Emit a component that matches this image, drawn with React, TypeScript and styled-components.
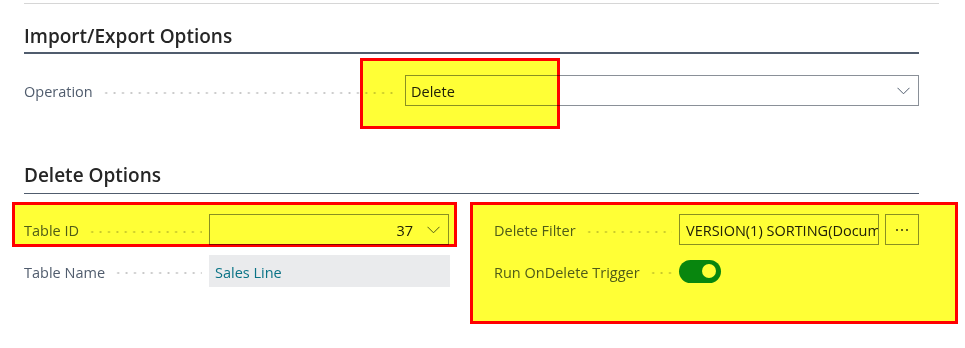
import React from "react";
import styled, { createGlobalStyle } from "styled-components";

const Global = createGlobalStyle`
  html, body { margin: 0; padding: 0; background: #ffffff; }
  body { font-family: "Open Sans", "Noto Sans", sans-serif; color: #212121; }
  * { box-sizing: border-box; }
`;

const Page = styled.div`
  position: relative;
  width: 965px;
  height: 348px;
  padding: 3px 0 0 24px;
  overflow: hidden;
`;

const TopRule = styled.div`
  width: 915px;
  height: 1px;
  background: #d6d6d6;
`;

const Section = styled.section<{ $top: number }>`
  width: 895px;
  margin-top: ${(p) => p.$top}px;
`;

const Heading = styled.h2<{ $rule: number; $gap: number }>`
  margin: 0;
  font-size: 19px;
  font-weight: 600;
  line-height: 22px;
  color: #262626;
  padding-bottom: ${(p) => p.$gap}px;
  border-bottom: ${(p) => p.$rule}px solid #505c6d;
`;

const Body = styled.div<{ $top: number }>`
  margin-top: ${(p) => p.$top}px;
`;

const Columns = styled.div`
  display: grid;
  grid-template-columns: 425px 425px;
  column-gap: 45px;
`;

const Column = styled.div`
  display: flex;
  flex-direction: column;
  gap: 10px;
`;

const Row = styled.div<{ $label: number; $h?: number }>`
  display: grid;
  grid-template-columns: ${(p) => p.$label}px 1fr;
  align-items: center;
  height: ${(p) => p.$h ?? 31}px;
`;

const Caption = styled.div<{ $end: number }>`
  display: flex;
  align-items: center;
  padding-top: 2px;
  padding-right: ${(p) => p.$end}px;
  font-size: 14.5px;
  color: #505c6d;
  white-space: nowrap;
`;

const Leader = styled.span`
  flex: 1;
  height: 2px;
  margin-left: 9px;
  margin-top: 2px;
  background-image: radial-gradient(circle, #c6c6c6 0.9px, transparent 1.2px);
  background-size: 8.4px 2px;
  background-repeat: repeat-x;
`;

const Input = styled.div<{ $align?: string }>`
  display: flex;
  align-items: center;
  justify-content: ${(p) => p.$align ?? "flex-start"};
  height: 31px;
  border: 1px solid #8a9098;
  background: #ffffff;
  padding: 2px 8px 0 5px;
  font-size: 14.5px;
  color: #212121;
  white-space: nowrap;
  overflow: hidden;
`;

const Value = styled.span<{ $grow?: boolean }>`
  flex: ${(p) => (p.$grow ? 1 : "none")};
  overflow: hidden;
`;

const Chevron = styled.svg`
  flex: none;
  margin-left: 14px;
  margin-bottom: 2px;
`;

const ReadOnly = styled.div`
  display: flex;
  align-items: center;
  height: 32px;
  width: 241px;
  background: #eaebed;
  padding: 2px 6px 0;
  font-size: 14.5px;
  color: #0a7386;
`;

const FilterWrap = styled.div`
  display: flex;
  gap: 6px;
`;

const FilterInput = styled(Input)`
  width: 200px;
  padding: 2px 6px 0;
`;

const EllipsisButton = styled.div`
  width: 34px;
  height: 31px;
  border: 1px solid #8a9098;
  display: flex;
  align-items: center;
  justify-content: center;
  gap: 3px;
`;

const Dot = styled.span`
  width: 2px;
  height: 2px;
  border-radius: 1px;
  background: #333333;
`;

const Toggle = styled.div<{ $on: boolean }>`
  width: 42px;
  height: 23px;
  border-radius: 12px;
  background: ${(p) => (p.$on ? "#08863f" : "#ffffff")};
  display: flex;
  align-items: center;
  justify-content: ${(p) => (p.$on ? "flex-end" : "flex-start")};
  padding: 0 5px;
`;

const Knob = styled.span`
  width: 14px;
  height: 14px;
  border-radius: 50%;
  background: #ffffff;
`;

const Highlight = styled.div<{ $x: number; $y: number; $w: number; $h: number }>`
  position: absolute;
  left: ${(p) => p.$x}px;
  top: ${(p) => p.$y}px;
  width: ${(p) => p.$w}px;
  height: ${(p) => p.$h}px;
  border: 3px solid #ff0000;
  background: #ffff36;
  mix-blend-mode: multiply;
  pointer-events: none;
`;

const Down = () => (
  <Chevron width="13" height="8" viewBox="0 0 13 8">
    <polyline points="0.5,0.8 6.5,6.8 12.5,0.8" fill="none" stroke="#505c6d" strokeWidth="1" />
  </Chevron>
);

export default function App() {
  return (
    <>
      <Global />
      <Page>
        <TopRule />
        <Section $top={21}>
          <Heading $rule={2} $gap={5}>Import/Export Options</Heading>
          <Body $top={21}>
            <Row $label={381}>
              <Caption $end={10}>
                Operation
                <Leader />
              </Caption>
              <Input>
                <Value $grow>Delete</Value>
                <Down />
              </Input>
            </Row>
          </Body>
        </Section>
        <Section $top={58}>
          <Heading $rule={1} $gap={7}>Delete Options</Heading>
          <Body $top={20}>
            <Columns>
              <Column>
                <Row $label={185}>
                  <Caption $end={7}>
                    Table ID
                    <Leader />
                  </Caption>
                  <Input $align="flex-end">
                    <Value>37</Value>
                    <Down />
                  </Input>
                </Row>
                <Row $label={185} $h={32}>
                  <Caption $end={7}>
                    Table Name
                    <Leader />
                  </Caption>
                  <ReadOnly>Sales Line</ReadOnly>
                </Row>
              </Column>
              <Column>
                <Row $label={185}>
                  <Caption $end={7}>
                    Delete Filter
                    <Leader />
                  </Caption>
                  <FilterWrap>
                    <FilterInput>
                      <Value>VERSION(1) SORTING(Document Type,Document No.,Line No.)</Value>
                    </FilterInput>
                    <EllipsisButton>
                      <Dot />
                      <Dot />
                      <Dot />
                    </EllipsisButton>
                  </FilterWrap>
                </Row>
                <Row $label={185} $h={32}>
                  <Caption $end={7}>
                    Run OnDelete Trigger
                    <Leader />
                  </Caption>
                  <div>
                    <Toggle $on>
                      <Knob />
                    </Toggle>
                  </div>
                </Row>
              </Column>
            </Columns>
          </Body>
        </Section>
        <Highlight $x={360} $y={58} $w={200} $h={71} />
        <Highlight $x={12} $y={202} $w={445} $h={45} />
        <Highlight $x={470} $y={202} $w={488} $h={122} />
      </Page>
    </>
  );
}
